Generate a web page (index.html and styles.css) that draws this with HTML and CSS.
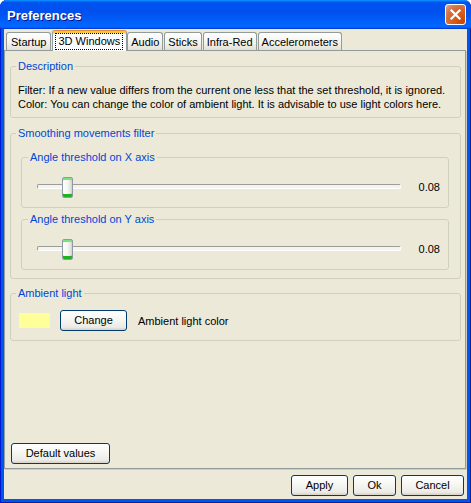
FILE: index.html
```html
<!DOCTYPE html>
<html lang="en">
<head>
<meta charset="utf-8">
<title>Preferences</title>
<link rel="stylesheet" href="styles.css">
</head>
<body>
<div class="window">
  <div class="titlebar">
    <span class="title">Preferences</span>
    <button class="close" aria-label="Close">
      <svg viewBox="0 0 21 21" width="21" height="21"><path d="M6.5 6.5 L14.5 14.5 M14.5 6.5 L6.5 14.5" stroke="#fff" stroke-width="2.2" stroke-linecap="square" fill="none"/></svg>
    </button>
  </div>
  <div class="client">
    <div class="tabs">
      <div class="tab">Startup</div>
      <div class="tab tab-active"><span class="focus">3D Windows</span></div>
      <div class="tab">Audio</div>
      <div class="tab">Sticks</div>
      <div class="tab">Infra-Red</div>
      <div class="tab">Accelerometers</div>
    </div>
    <div class="panel">
      <fieldset class="group group-desc">
        <legend>Description</legend>
        <p class="desc">Filter: If a new value differs from the current one less that the set threshold, it is ignored.<br>Color: You can change the color of ambient light. It is advisable to use light colors here.</p>
      </fieldset>
      <fieldset class="group group-smooth">
        <legend>Smoothing movements filter</legend>
        <fieldset class="group group-inner">
          <legend>Angle threshold on X axis</legend>
          <div class="slider-row">
            <div class="slider"><div class="track"></div><div class="thumb"></div></div>
            <span class="value">0.08</span>
          </div>
        </fieldset>
        <fieldset class="group group-inner group-inner-next">
          <legend>Angle threshold on Y axis</legend>
          <div class="slider-row">
            <div class="slider"><div class="track"></div><div class="thumb"></div></div>
            <span class="value">0.08</span>
          </div>
        </fieldset>
      </fieldset>
      <fieldset class="group group-ambient">
        <legend>Ambient light</legend>
        <div class="ambient-row">
          <span class="swatch"></span>
          <button class="btn btn-change">Change</button>
          <span class="ambient-label">Ambient light color</span>
        </div>
      </fieldset>
      <div class="panel-footer">
        <button class="btn btn-default">Default values</button>
      </div>
    </div>
    <div class="dialog-buttons">
      <button class="btn btn-apply">Apply</button>
      <button class="btn btn-ok">Ok</button>
      <button class="btn btn-cancel">Cancel</button>
    </div>
  </div>
</div>
</body>
</html>
```

FILE: styles.css
```css
* { box-sizing: border-box; }
html, body { margin: 0; padding: 0; }
body {
  background: #ffffff;
  font-family: Tahoma, "Liberation Sans", Arial, sans-serif;
  font-size: 11px;
  color: #000;
}

.window {
  width: 471px;
  height: 503px;
  display: flex;
  flex-direction: column;
  background: #0055EA;
  border-radius: 7px 7px 0 0;
  overflow: hidden;
  box-shadow: inset 1px 0 #0019CF, inset -1px -1px #001EA0;
}

.titlebar {
  flex: none;
  height: 29px;
  display: flex;
  align-items: center;
  padding: 2px 5px 0 7px;
  background: linear-gradient(180deg, #0997ff, #0053ee 8%, #0050ee 40%, #0066ff 88%, #0066ff 93%, #005bff 95%, #003dd7 96%, #003dd7);
}
.title {
  flex: 1;
  color: #fff;
  font: bold 13px "Liberation Sans", Arial, sans-serif;
  text-shadow: 1px 1px #0F1089;
}
.close {
  width: 21px;
  height: 21px;
  padding: 0;
  border: 1px solid #fff;
  border-radius: 3px;
  background: radial-gradient(circle at 90% 90%, #CC4600 0%, #DC6527 55%, #CD7546 70%, #E2907A 90%, #F3BAA2 100%);
  display: flex;
  align-items: center;
  justify-content: center;
  margin-top: -2px;
}
.close svg { display: block; margin: -1px; }

.client {
  flex: 1;
  margin: 0 4px 4px;
  background: #ECE9D8;
  padding: 1px 1px 3px 0;
  display: flex;
  flex-direction: column;
}

.tabs {
  flex: none;
  height: 20px;
  display: flex;
  align-items: flex-end;
  padding-left: 2px;
  position: relative;
  z-index: 2;
}
.tab {
  height: 18px;
  padding: 2px 3px 0;
  margin-right: 1px;
  border: 1px solid #919B9C;
  border-bottom: none;
  border-radius: 3px 3px 0 0;
  background: linear-gradient(180deg, #ffffff, #F3F2EC 60%, #E3E0D2);
  display: flex;
  align-items: center;
  line-height: 13px;
  white-space: nowrap;
}
.tab:first-child { padding: 2px 4px 0; }
.tab-active {
  height: 21px;
  margin: 0 0 -1px 0;
  padding: 2px 3px 2px 2px;
  background: #FCFCFE;
  border-top: 1px solid #E68B2C;
  box-shadow: inset 0 2px #FFC83C;
  align-items: flex-start;
}
.focus {
  border: 1px dotted #000;
  padding: 1px 2px;
  line-height: 13px;
}

.panel {
  flex: 1;
  min-height: 0;
  border: 1px solid #919B9C;
  box-shadow: 1px 1px 0 #D0CEBF;
  background: #ECE9D8;
  padding: 0 4px 0 5px;
  display: flex;
  flex-direction: column;
}

.group {
  margin: 9px 0 0;
  padding: 0 0 0 7px;
  border: 1px solid #D0D0BF;
  border-radius: 3px;
  min-width: 0;
}
.group legend {
  color: #0046D5;
  padding: 0 2px;
  margin-left: -2px;
  line-height: 13px;
}

.desc {
  margin: 10px 0 6px;
  line-height: 14px;
  white-space: nowrap;
}

.group-smooth { padding-bottom: 8px; }
.group-inner {
  margin: 11px 11px 0 3px;
  padding-left: 8px;
}
.group-inner-next { margin-top: 5px; }
.group-ambient { margin-top: 8px; }

.slider-row {
  display: flex;
  align-items: center;
  gap: 18px;
  margin: 13px 8px 9px 7px;
  height: 21px;
}
.slider {
  flex: 1;
  height: 21px;
  position: relative;
}
.track {
  position: absolute;
  left: 0;
  right: 0;
  top: 7px;
  height: 5px;
  border: 1px solid;
  border-color: #9D9C99 #ffffff #ffffff #9D9C99;
  border-radius: 2px;
  background: #F4F3EE;
}
.thumb {
  position: absolute;
  top: 0;
  left: 25px;
  width: 11px;
  height: 21px;
  border: 1px solid #8C9BA6;
  border-radius: 2px;
  background: linear-gradient(90deg, #ffffff 0%, #F6F6F3 50%, #E2E2DA 85%, #D0D0C6 100%);
  box-shadow: inset 0 2px #7BE27B, inset 0 -3px #22B122;
}
.value { line-height: 13px; }

.ambient-row {
  display: flex;
  align-items: center;
  margin: 10px 0 9px 1px;
}
.swatch {
  width: 31px;
  height: 15px;
  background: #FFFF99;
}
.ambient-label { margin-left: 11px; }

.btn {
  font-family: Tahoma, "Liberation Sans", Arial, sans-serif;
  font-size: 11px;
  color: #000;
  height: 21px;
  padding: 0;
  border: 1px solid #003C74;
  border-radius: 3px;
  background: linear-gradient(180deg, #ffffff 0%, #F7F7F4 40%, #ECEBE6 85%, #D6D0C5 100%);
  line-height: 13px;
}
.btn-change { width: 67px; margin-left: 10px; }

.panel-footer {
  margin-top: auto;
  padding: 0 0 4px 1px;
}
.btn-default { width: 99px; }

.dialog-buttons {
  flex: none;
  display: flex;
  justify-content: flex-end;
  gap: 5px;
  margin-top: 6px;
  padding-right: 2px;
}
.btn-apply { width: 57px; }
.btn-ok { width: 43px; }
.btn-cancel { width: 63px; }
```
